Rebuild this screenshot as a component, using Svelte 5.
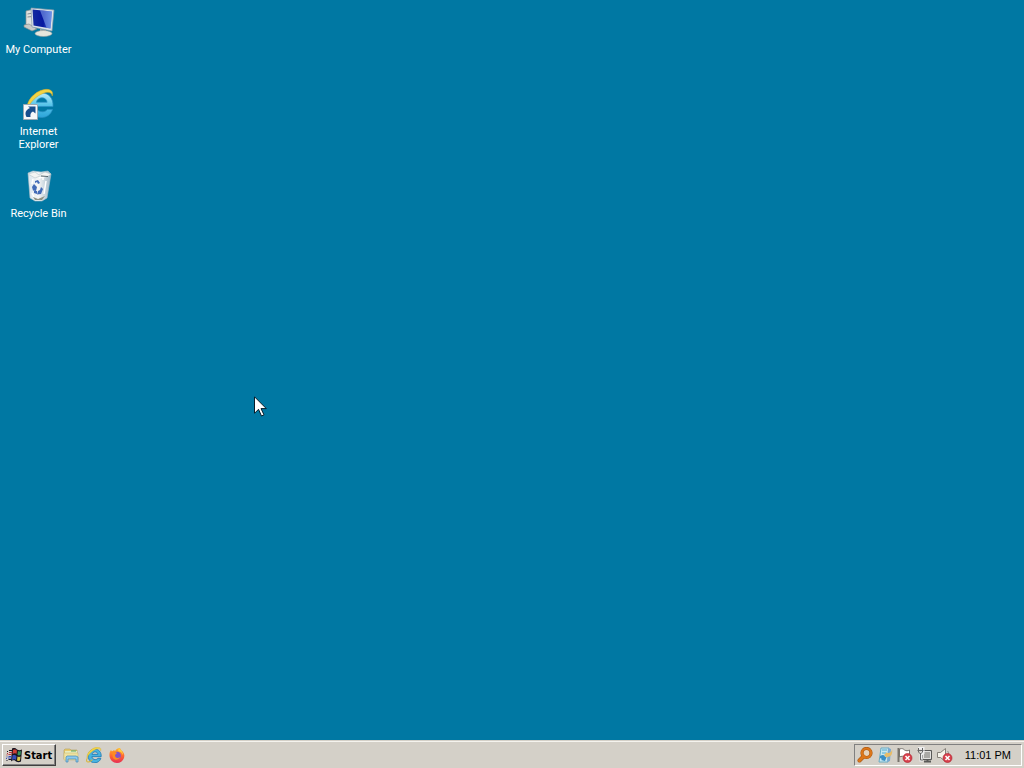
<script>
    let shortcuts = [
        { id: "computer", label: "My Computer" },
        { id: "ie", label: "Internet Explorer" },
        { id: "bin", label: "Recycle Bin" }
    ];
    let selected = "";
    let time = "11:01 PM";
</script>

<svelte:head>
    <title>Desktop</title>
</svelte:head>

{#snippet explorer()}
    <path d="M30 18.500H13.200c.4 3.500 2.900 5.300 6.200 5.300 2.100 0 3.800-.8 4.800-2.300h5.300c-1.800 5.200-5.900 8-10.800 8-7.300 0-12.200-5-12.200-12C6.500 10.500 11.600 5 18.700 5 26 5 30.500 10.500 30 18.500zM13.400 14.300h10.700c-.3-2.800-2.200-4.500-5.100-4.500-2.900 0-5 1.600-5.600 4.500z" />
    <path d="M4.500 21C2.500 14 11 3.500 21 1.600c6-1.200 10 1.700 8.200 6.400-.3-3.700-4.200-4.500-8.600-2.800C13.200 8 7.500 13.500 4.500 21z" fill="#f3d443" stroke="#c9a42a" stroke-width=".5" />
{/snippet}

{#snippet redCross()}
    <circle cx="10.500" cy="11" r="4.500" fill="#d8414c" stroke="#a91f2b" stroke-width=".6" />
    <path d="M8.500 9l4 4M12.500 9l-4 4" stroke="#fff" stroke-width="1.500" />
{/snippet}

<div class="screen">
    <main class="desktop">
        {#each shortcuts as item}
            <button type="button" class="shortcut" on:click={() => (selected = item.id)}>
                <svg width="32" height="32" viewBox="0 0 32 32" aria-hidden="true">
                    {#if item.id === "computer"}
                        <path d="M3 5l8-2v20l-8-3z" fill="#dfe2df" stroke="#8b918f" stroke-width=".7" />
                        <path d="M4.500 8l4-.7M4.500 11l4-.4" stroke="#858c90" />
                        <path d="M1 19l5-1 8 5-5 2-8-4z" fill="#c6cac8" stroke="#7d8584" stroke-width=".6" />
                        <path d="M17 23l6 1v4l-6-1z" fill="#aaafae" />
                        <ellipse cx="20.500" cy="27.500" rx="8.500" ry="3" fill="#e5e6dd" stroke="#929c9c" stroke-width=".6" />
                        <path d="M8 2l23 2-2 21-20-4z" fill="#dce3e8" stroke="#8499aa" stroke-width=".7" />
                        <path d="M9.500 3.500l19.500 2-1.500 17-17-3z" fill="url(#screenBlue)" />
                        <path d="M17 4.200l12 1.300-1.500 17-4-.8z" fill="#7897e6" opacity=".65" />
                    {:else if item.id === "ie"}
                        <g fill="url(#ieBlue)" stroke="#2b91c4" stroke-width=".7">
                            {@render explorer()}
                        </g>
                        <path d="M.5 16.500h14v15H.5z" fill="#f6f8f9" stroke="#9aa9b3" />
                        <path d="M3.500 29c-2-4-1-7 3.500-9l-2-1.500h7.500v7L10 23.500c-2 1-3 2.500-2.500 5.500z" fill="#194f8d" />
                    {:else}
                        <path d="M5 3l5-2 8 1 7-1 3 3-4 24-5 3h-7l-5-3z" fill="url(#binGlass)" stroke="#aebfca" stroke-width=".6" />
                        <path d="M5 4l7-2 4 3 6-3 6 2-4 3-7-1-5 2z" fill="#f4f5f3" stroke="#b6c4ca" stroke-width=".6" />
                        <path d="M16 8l8-2M20 7v3M10 9l-1 5M23 11l-2 13M9 23l2 4" stroke="#fff" stroke-width="1.500" />
                        <path d="M18 6l7 .5" stroke="#53646b" />
                        <path d="M12 11l3-1 2 3-2 1-1-2-2 1zM9 17l2-3 3 3-1 4-3-.5zM15 21l2-1 1-3 2 2-2 5-4 .5zM11 21l3 0v3l-3-1z" fill="#426bb7" />
                        <path d="M10 27l5 2 7-3-3 4h-7z" fill="#8f9385" />
                    {/if}
                </svg>
                <span>{item.label}</span>
            </button>
        {/each}
    </main>

    <svg class="cursor" width="13" height="21" viewBox="0 0 13 21" aria-hidden="true">
        <path d="M.5.800v16.500l4-4 3 6.700 2.500-1.200-3-6.200h5.300z" fill="#fff" stroke="#071c29" />
    </svg>

    <footer class="taskbar">
        <button type="button" class="start">
            <svg width="16" height="16" viewBox="0 0 16 16" aria-hidden="true">
                <path d="M6 1.500c3-1 4 0 5 1 2 1 3 1 5 0l-1 12c-2 1-3 1-5 0-1-1-3-2-5 0z" fill="#181520" />
                <path d="M7 3c2-1 3 0 4 .5L10.500 7c-1-1-2-1-4 0z" fill="#cf3e35" />
                <path d="M12 4c1 .5 2 .5 3 0l-.5 4c-1 .5-2 .5-3 0z" fill="#35965e" />
                <path d="M6.500 8.500c2-1 3 0 4 .5L10 13c-1-1-2-1-4 0z" fill="#354db8" />
                <path d="M11.500 9.500c1 .5 2 .5 3 0l-.5 4c-1 .5-2 .5-3 0z" fill="#d9c64d" />
                <path d="M1 4.500h1M3 3.500h3M.5 13.500h1M2.500 12.500h3" stroke="#181520" />
                <path d="M1 6.500h1M3 5.500h3M.5 8h1M2.500 7.500h3" stroke="#c0353c" />
                <path d="M.5 10h1M2.500 9.500h3M0 11.500h1M2 11h3" stroke="#3d4fba" />
            </svg>
            <span>Start</span>
        </button>

        <nav class="quick" aria-label="Quick launch">
            <button type="button" aria-label="Windows Explorer">
                <svg width="16" height="16" viewBox="0 0 16 16" aria-hidden="true">
                    <path d="M1 3l1-1h5l1 1h6v9H1z" fill="#e9ca6c" stroke="#b3a05b" stroke-width=".6" />
                    <path d="M2 4h12v6H2z" fill="#e8edbd" />
                    <path d="M8 4h5" stroke="#5daa6d" />
                    <path d="M1 6h14v7H1z" fill="#f0e29e" stroke="#c7b673" stroke-width=".5" />
                    <path d="M3 15v-5l1-1h9l2 1v5h-2v-3H5v3z" fill="#8dcaed" stroke="#458bb5" stroke-width=".7" />
                </svg>
            </button>
            <button type="button" aria-label="Internet Explorer">
                <svg width="16" height="16" viewBox="3 1 28 29" aria-hidden="true">
                    <g fill="#48b4e0" stroke="#1977b4" stroke-width="1.500">
                        {@render explorer()}
                    </g>
                    <path d="M5 21c-3 5-1 8 3 7 2-.5 4-2 6-4" fill="none" stroke="#d8b53d" stroke-width="2" />
                </svg>
            </button>
            <button type="button" aria-label="Firefox">
                <svg width="16" height="16" viewBox="0 0 16 16" aria-hidden="true">
                    <path d="M2 3l1 1.500L5 3l1 1c1-2 3-3 5-3l1 2c3 2 4 5 3 8-1 3-4 5-7 5-4 0-7-3-7.500-7C.3 6 1 4 2 3z" fill="url(#firefox)" />
                    <circle cx="8" cy="8.500" r="3.800" fill="#8252c8" />
                    <path d="M2 5c2-1 5 0 6 1l-2 2c0 3 3 4 5 2-1 3-5 4-7 1C3 9 4 7 2 5z" fill="#ff8a22" />
                    <path d="M10 1c1 2 4 3 4 7l-2-3-3-1z" fill="#ffd33c" />
                </svg>
            </button>
        </nav>

        <div class="tray">
            <svg width="16" height="16" viewBox="0 0 16 16" role="img" aria-label="Search">
                <path d="M7 9l-4.500 4.500" stroke="#a95710" stroke-width="4" stroke-linecap="round" />
                <circle cx="9.500" cy="6" r="4.500" fill="#e5d3bd" stroke="#a95710" stroke-width="3.200" />
                <circle cx="9.500" cy="6" r="4.500" fill="none" stroke="#dc761a" stroke-width="2.200" />
                <path d="M7 9l-4.500 4.500" stroke="#dc761a" stroke-width="3" stroke-linecap="round" />
            </svg>
            <svg width="16" height="16" viewBox="0 0 16 16" role="img" aria-label="Updates">
                <path d="M4 1h8l-1 14H2z" fill="#c8e7ef" stroke="#68abc4" />
                <path d="M5 3h5M5 6h4" stroke="#55acd0" />
                <path d="M11 1l3 1-1 12-3 1z" fill="#79a9d0" />
                <path d="M3 9c3-2 5-1 5 1l2-1-2 5-4-1 1-1-2-1z" fill="#398ec5" />
                <path d="M10 6c4 0 5-2 5-4 1 5-1 8-5 8v1L7 8l3-3z" fill="#e8bc68" />
            </svg>
            <svg width="16" height="16" viewBox="0 0 16 16" role="img" aria-label="Action Center">
                <path d="M1.500 1v14" stroke="#77736c" stroke-width="2" />
                <path d="M2.500 2c3-1 4 0 5 1 2 1 3 1 5 0v7c-2 1-3 1-5 0-1-1-3-1-5 0z" fill="#fff" stroke="#77736c" />
                {@render redCross()}
            </svg>
            <svg width="16" height="16" viewBox="0 0 16 16" role="img" aria-label="Network">
                <path d="M5.500 3.500h9v9h-9z" fill="#aaa9a5" stroke="#595957" />
                <path d="M6.500 4.500h7v7h-7z" fill="none" stroke="#e2e1de" />
                <path d="M10.500 12v2M7 14.500h7" stroke="#595957" stroke-width="2" />
                <path d="M1 1h5v5L4.500 7H4v6h2" fill="none" stroke="#eee" stroke-width="3" />
                <path d="M1.500 1v4l2 2 2-2V1M.5 3.500h6M3.500 6v7H6" fill="none" stroke="#666" />
            </svg>
            <svg width="16" height="16" viewBox="0 0 16 16" role="img" aria-label="Volume muted">
                <path d="M.5 5.500h3l5-4v13l-5-4h-3z" fill="#f5f3ea" stroke="#858078" />
                <path d="M10.500 4c1 1 1 2 1 3" fill="none" stroke="#888" />
                {@render redCross()}
            </svg>
            <time>{time}</time>
        </div>
    </footer>
</div>

<svg class="defs" width="0" height="0" aria-hidden="true">
    <defs>
        <linearGradient id="screenBlue">
            <stop offset="0" stop-color="#142ba0" />
            <stop offset=".55" stop-color="#0717a0" />
            <stop offset="1" stop-color="#5c8ae6" />
        </linearGradient>
        <linearGradient id="ieBlue" x2="0" y2="1">
            <stop offset="0" stop-color="#b8edfc" />
            <stop offset=".5" stop-color="#54c3e8" />
            <stop offset="1" stop-color="#2ca4d9" />
        </linearGradient>
        <linearGradient id="binGlass">
            <stop offset="0" stop-color="#d9e6ef" />
            <stop offset=".45" stop-color="#f5f6f6" />
            <stop offset="1" stop-color="#9db7c7" />
        </linearGradient>
        <linearGradient id="firefox" x2="0" y2="1">
            <stop offset="0" stop-color="#ffb52d" />
            <stop offset=".5" stop-color="#ff6a2f" />
            <stop offset="1" stop-color="#e62d55" />
        </linearGradient>
    </defs>
</svg>

<style>
    :global(body) {
        background: #0078a3;
        overflow: hidden;
    }

    .screen {
        display: flex;
        flex-direction: column;
        height: 100vh;
        font-family: Roboto, Tahoma, sans-serif;
        font-size: 11px;
    }

    button {
        border: 0;
        padding: 0;
        background: none;
        font: inherit;
    }

    svg {
        display: block;
        flex-shrink: 0;
    }

    .desktop {
        flex: 1;
        display: grid;
        grid-template-columns: 77px;
        grid-auto-rows: 82px;
        align-content: start;
        padding-top: 6px;
    }

    .shortcut {
        display: flex;
        flex-direction: column;
        align-items: center;
        gap: 5px;
        color: #fff;
        line-height: 13px;
    }

    .shortcut span {
        max-width: 68px;
    }

    .cursor {
        position: absolute;
        left: 254px;
        top: 396px;
    }

    .taskbar {
        display: flex;
        align-items: center;
        height: 24px;
        padding: 1px 2px;
        border-top: 1px solid #f5f3ee;
        background: #d4d0c8;
        box-shadow: 0 -1px #d4d0c8;
    }

    .start {
        display: flex;
        align-items: center;
        gap: 2px;
        height: 22px;
        padding: 0 3px;
        border: 1px solid;
        border-color: #fff #404040 #404040 #fff;
        box-shadow: inset -1px -1px #808080;
        font-family: "DejaVu Sans Condensed", Tahoma, sans-serif;
        font-weight: bold;
    }

    .quick {
        display: flex;
        align-items: center;
        gap: 7px;
        margin-left: 7px;
    }

    .tray {
        display: flex;
        align-items: center;
        gap: 4px;
        height: 20px;
        margin-left: auto;
        padding: 0 10px 0 2px;
        border: 1px solid;
        border-color: #808080 #fff #fff #808080;
    }

    time {
        margin-left: 8px;
        font-family: "Liberation Sans", Arial, sans-serif;
    }

    .defs {
        position: absolute;
    }
</style>
